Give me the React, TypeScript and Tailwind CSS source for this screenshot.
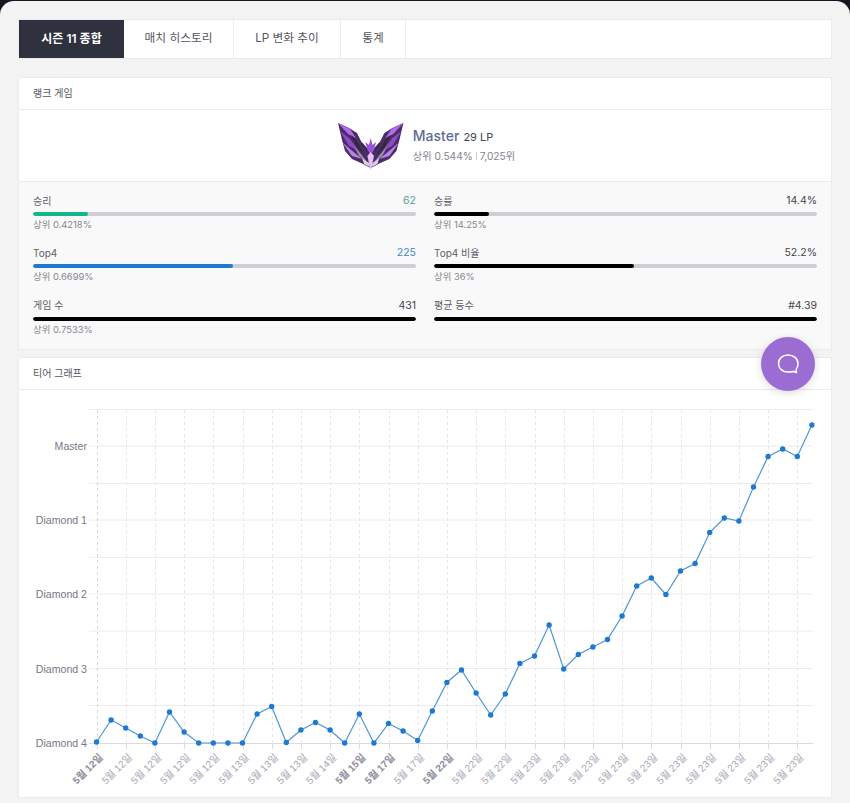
const tabs = ["시즌 11 종합", "매치 히스토리", "LP 변화 추이", "통계"];

const tabWidths = ["w-[105px]", "w-[110px]", "w-[107px]", "w-[65px]"];

type Stat = { label: string; value: string; valueColor: string; percent: number; barColor: string; sub?: string };

const stats: Stat[] = [
  { label: "승리", value: "62", valueColor: "text-[#5f9c98]", percent: 14.4, barColor: "bg-[#13b58c]", sub: "상위 0.4218%" },
  { label: "승률", value: "14.4%", valueColor: "text-[#44444f]", percent: 14.4, barColor: "bg-black", sub: "상위 14.25%" },
  { label: "Top4", value: "225", valueColor: "text-[#3f86cc]", percent: 52.2, barColor: "bg-[#2179cf]", sub: "상위 0.6699%" },
  { label: "Top4 비율", value: "52.2%", valueColor: "text-[#44444f]", percent: 52.2, barColor: "bg-black", sub: "상위 36%" },
  { label: "게임 수", value: "431", valueColor: "text-[#44444f]", percent: 100, barColor: "bg-black", sub: "상위 0.7533%" },
  { label: "평균 등수", value: "#4.39", valueColor: "text-[#44444f]", percent: 100, barColor: "bg-black" },
];

const points = [
  742, 720, 728, 736, 743, 712, 732, 743, 743, 743, 743, 714, 706.5, 742.5, 730, 722.5, 730, 743, 714, 743,
  723.5, 731, 740.5, 711, 682.5, 670, 693, 715, 694, 663.5, 656, 625, 669, 654.5, 647, 639.5, 616, 586, 578,
  594.5, 571, 563.5, 532.5, 518, 521, 487, 456.5, 449, 456.5, 425,
];

const pointX = (i: number) => 96.5 + i * 14.6;

const gridLines = [409.5, 446, 483.5, 520, 557.5, 594, 631, 668.5, 705.5];

const yLabels = [
  { y: 446, text: "Master" },
  { y: 520, text: "Diamond 1" },
  { y: 594, text: "Diamond 2" },
  { y: 668.5, text: "Diamond 3" },
  { y: 743, text: "Diamond 4" },
];

const xLabels = [
  { day: 12, bold: true }, { day: 12 }, { day: 12 }, { day: 12 }, { day: 12 },
  { day: 13 }, { day: 13 }, { day: 13 }, { day: 14 }, { day: 15, bold: true },
  { day: 17, bold: true }, { day: 17 }, { day: 22, bold: true }, { day: 22 }, { day: 22 },
  { day: 23 }, { day: 23 }, { day: 23 }, { day: 23 }, { day: 23 },
  { day: 23 }, { day: 23 }, { day: 23 }, { day: 23 }, { day: 23 },
];

const MasterEmblem = () => (
  <svg viewBox="0 0 70 55" className="h-[55px] w-[70px] blur-[0.4px]">
    {[false, true].map((flip) => (
      <g key={String(flip)} transform={flip ? "matrix(-1 0 0 1 71.4 0)" : undefined}>
        <path d="M3 5 L14 10 L22 15 L27 25 L35.7 36 L35.7 50 L26 45 L17 41 L10 33 L7 22 Z" fill="#4a2c66" />
        <path d="M3 5 L15 11 L21 20 L13 16 Z" fill="#b468ec" />
        <path d="M5 13 L14 20 L24 33 L14 28 Z" fill="#8a4cc4" />
        <path d="M7 24 L15 31 L27 41 L17 38 Z" fill="#bd7fea" />
        <path d="M16 17 L21 22 L29 36 L22 30 Z" fill="#35263f" />
        <path d="M19 28 L26 36 L32 44 L24 38 Z" fill="#9d8fa6" />
        <path d="M27 40 L34 45 L35 49 L29 46 Z" fill="#d8cedd" />
        <path d="M26.7 24 L35.7 34 L35.7 37 L26 27 Z" fill="#3a2a48" />
      </g>
    ))}
    <path d="M35.7 20 L37.5 27 L41 24 L39 32 L35.7 37 L32.4 32 L30.4 24 L33.9 27 Z" fill="#9a52dc" />
    <path d="M35.7 34 L39 38 L35.7 53 L32.4 38 Z" fill="#e6c2f7" />
  </svg>
);

const TierChart = () => (
  <svg viewBox="19 390 812 407" className="block h-[407px] w-[812px] font-['Liberation_Sans','Noto_Sans_CJK_KR',sans-serif]">
    {gridLines.map((y) => (
      <line key={y} x1="89" x2="813" y1={y} y2={y} stroke="#ececef" strokeWidth="1" />
    ))}
    <line x1="89" x2="813" y1="743.5" y2="743.5" stroke="#dcdce0" strokeWidth="1" />
    {xLabels.map((_, i) => {
      const x = Math.round(pointX(i * 2)) + 0.5;
      return (
        <g key={i}>
          <line x1={x} x2={x} y1="410" y2="743" stroke={i === 0 ? "#d8d8dd" : "#e6e6ea"} strokeDasharray="3 3" />
          <line x1={x} x2={x} y1="743" y2="749" stroke="#dcdce0" />
        </g>
      );
    })}
    {yLabels.map((l) => (
      <text key={l.text} x="87" y={l.y + 4} textAnchor="end" fontSize="10.6" fill="#777784">
        {l.text}
      </text>
    ))}
    {xLabels.map((l, i) => {
      const x = pointX(i * 2) + 7;
      return (
        <text
          key={i}
          x={x}
          y="758"
          textAnchor="end"
          fontSize="10"
          fontWeight={l.bold ? 700 : 400}
          fill={l.bold ? "#8c8c9a" : "#a6a6b3"}
          transform={`rotate(-45 ${x} 758)`}
        >
          {`5월 ${l.day}일`}
        </text>
      );
    })}
    <polyline
      points={points.map((y, i) => `${pointX(i)},${y}`).join(" ")}
      fill="none"
      stroke="#4b96d8"
      strokeWidth="1.2"
    />
    {points.map((y, i) => (
      <circle key={i} cx={pointX(i)} cy={y} r="2.7" fill="#1f78d1" />
    ))}
  </svg>
);

export default function App() {
  return (
    <div className="relative min-h-[803px] bg-[#17171f] pt-[1px] text-[#44444f] font-['Inter','Noto_Sans_CJK_KR',sans-serif]">
      <div className="h-[802px] overflow-hidden rounded-t-[14px] bg-[#f3f3f3] px-[18px] pt-[18px]">
        <nav className="flex h-[40px] w-[814px] border border-[#ececef] bg-white">
          {tabs.map((tab, i) => (
            <div
              key={tab}
              className={
                i === 0
                  ? `${tabWidths[i]} flex items-center justify-center bg-[#30313f] text-[12px] font-semibold text-white`
                  : `${tabWidths[i]} flex items-center justify-center border-r border-[#ececef] text-[11.7px] text-[#55555f]`
              }
            >
              {tab}
            </div>
          ))}
        </nav>

        <section className="mt-[18px] w-[814px] border border-[#ececef] bg-white">
          <h2 className="flex h-[32px] items-center border-b border-[#ececef] pl-[14px] text-[10px] font-normal text-[#55555f]">
            랭크 게임
          </h2>
          <div className="flex h-[71px] items-center justify-center gap-[8px]">
            <MasterEmblem />
            <div className="mb-[1px]">
              <div className="flex items-baseline gap-[4px] leading-[20px]">
                <span className="text-[14px] font-medium text-[#5f6a9c]">Master</span>
                <span className="text-[11px] text-[#44444f]">29 LP</span>
              </div>
              <div className="flex items-center text-[10.2px] leading-[18px] text-[#85858f]">
                <span>상위 0.544%</span>
                <span className="mx-[3px] h-[8px] w-px bg-[#cdced6]" />
                <span>7,025위</span>
              </div>
            </div>
          </div>
          <div className="grid grid-cols-2 gap-x-[18px] border-t border-[#ececef] bg-[#f9f9fa] px-[14px] pt-[10px]">
            {stats.map((s) => (
              <div key={s.label} className="h-[52.33px]">
                <div className="flex h-[18px] items-center justify-between text-[10px]">
                  <span className="text-[#5e5e6a]">{s.label}</span>
                  <span className={`${s.valueColor} text-[10.5px]`}>{s.value}</span>
                </div>
                <div className="mt-[2px] h-[4px] overflow-hidden rounded-full bg-[#cdced6]">
                  <div className={`${s.barColor} h-full rounded-full`} style={{ width: `${s.percent}%` }} />
                </div>
                {s.sub && <div className="mt-[1px] text-[9.4px] leading-[16px] text-[#85858f]">{s.sub}</div>}
              </div>
            ))}
          </div>
        </section>

        <section className="mt-[7px] w-[814px] border border-[#ececef] bg-white">
          <h2 className="flex h-[32px] items-center border-b border-[#ececef] pl-[14px] text-[10px] font-normal text-[#55555f]">
            티어 그래프
          </h2>
          <TierChart />
        </section>
      </div>

      <button className="absolute left-[761px] top-[337px] flex h-[54px] w-[54px] items-center justify-center rounded-full bg-[#9b6dd3] shadow-[0_2px_8px_rgba(0,0,0,0.15)]">
        <svg viewBox="0 0 24 24" className="h-[24px] w-[24px]" fill="none" stroke="white" strokeWidth="1.5" strokeLinejoin="round">
          <path d="M12 3 C6.5 3 2.5 6.5 2.5 11.5 C2.5 16.5 6.5 20 12 20 C14 20 16 20 17.5 19.5 L20.5 20.5 L20 17.5 C21.5 16 22 13.5 22 11.5 C22 6.5 17.5 3 12 3 Z" />
        </svg>
      </button>
    </div>
  );
}
